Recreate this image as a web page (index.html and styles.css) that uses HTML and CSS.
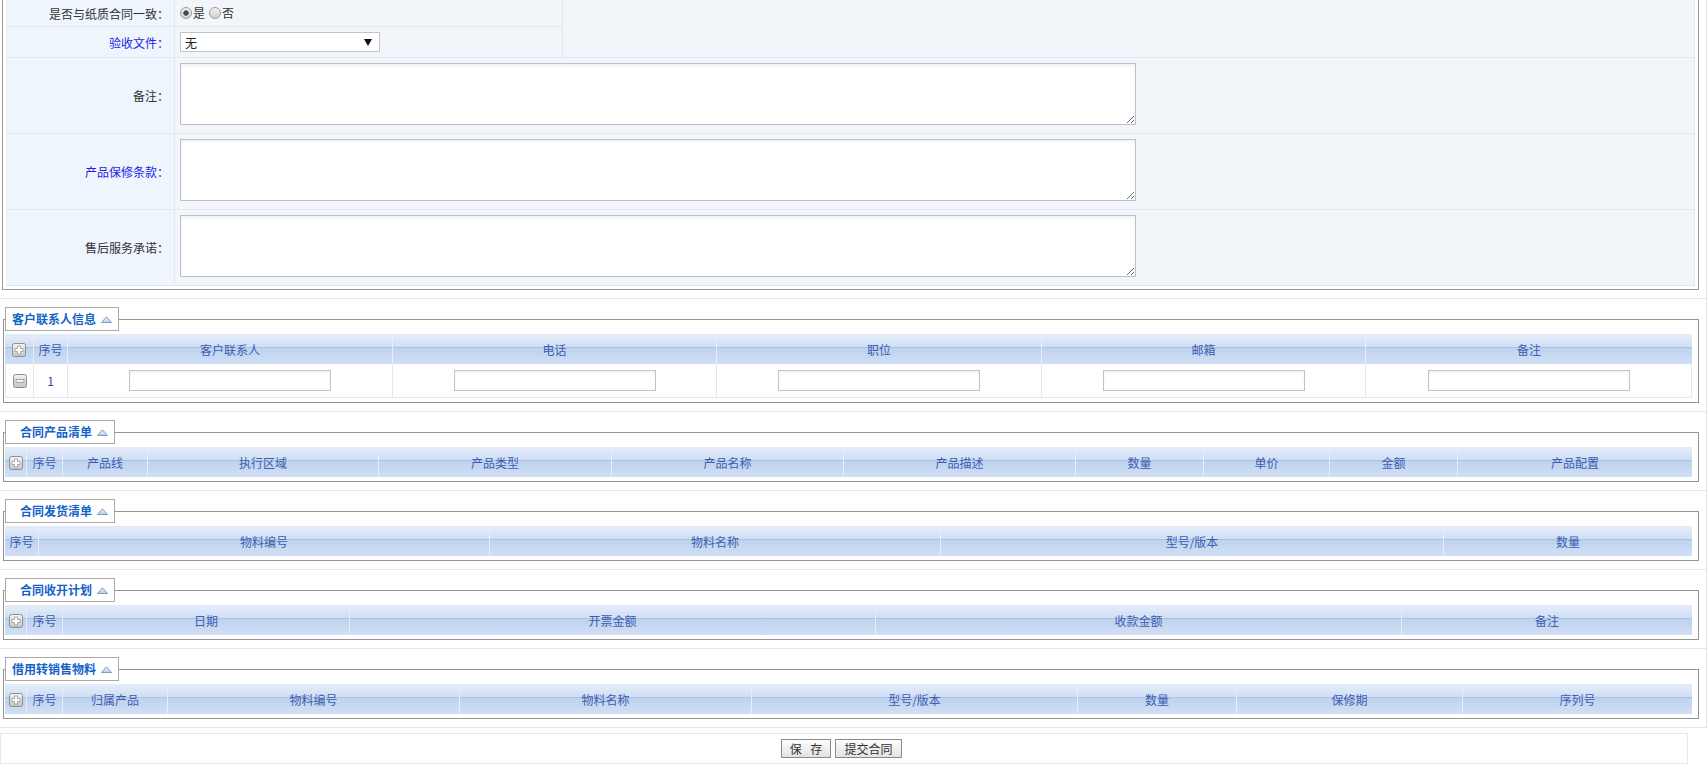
FILE: index.html
```html
<!DOCTYPE html>
<html lang="zh-CN">
<head>
<meta charset="utf-8">
<title>合同信息</title>
<link rel="stylesheet" href="styles.css">
</head>
<body>
<svg class="defs" width="0" height="0" aria-hidden="true">
  <defs>
    <linearGradient id="gbtn" x1="0" y1="0" x2="0" y2="1">
      <stop offset="0" stop-color="#f4f4f4"/>
      <stop offset="1" stop-color="#c4c4c4"/>
    </linearGradient>
    <linearGradient id="gtri" x1="0" y1="0" x2="0" y2="1">
      <stop offset="0" stop-color="#eaf2fc"/>
      <stop offset="1" stop-color="#b9d0ee"/>
    </linearGradient>
  </defs>
</svg>
<div class="page">
  <div class="sec sec-form">
    <div class="formbox">
      <table class="form">
        <colgroup><col class="fc1"><col class="fc2"><col class="fc3"></colgroup>
        <tr class="r1">
          <td class="lbl">是否与纸质合同一致：</td>
          <td class="val"><label class="radio"><input type="radio" name="same" checked>是</label><label class="radio"><input type="radio" name="same">否</label></td>
          <td class="val" rowspan="2"></td>
        </tr>
        <tr class="r2">
          <td class="lbl blue">验收文件：</td>
          <td class="val"><span class="selwrap"><select class="sel"><option>无</option></select></span></td>
        </tr>
        <tr class="rt">
          <td class="lbl">备注：</td>
          <td class="val top" colspan="2"><textarea></textarea></td>
        </tr>
        <tr class="rt">
          <td class="lbl blue">产品保修条款：</td>
          <td class="val top" colspan="2"><textarea></textarea></td>
        </tr>
        <tr class="rt">
          <td class="lbl">售后服务承诺：</td>
          <td class="val top" colspan="2"><textarea></textarea></td>
        </tr>
      </table>
    </div>
  </div>

  <div class="sec">
    <fieldset>
      <legend class="lg-a">客户联系人信息<svg class="tri" width="11" height="7" viewBox="0 0 11 7"><path d="M0.5 6.5 L5.5 0.8 L10.5 6.5 Z" fill="url(#gtri)" stroke="#7d9bc6"/></svg></legend>
      <table class="grid t-contact">
        <colgroup><col class="w29"><col class="w34"><col class="w325"><col class="w324"><col class="w325"><col class="w324"><col class="w326"></colgroup>
        <tr>
          <th><svg class="ico" width="14" height="14" viewBox="0 0 14 14"><rect x="0.5" y="0.5" width="13" height="13" rx="2" fill="url(#gbtn)" stroke="#8e8e8e"/><path d="M5.5 3 h3 v2.5 h2.5 v3 h-2.5 v2.5 h-3 v-2.5 h-2.5 v-3 h2.5z" fill="#fff" stroke="#9a9a9a" stroke-width="0.8"/></svg></th>
          <th>序号</th><th>客户联系人</th><th>电话</th><th>职位</th><th>邮箱</th><th>备注</th>
        </tr>
        <tr class="drow">
          <td><svg class="ico" width="14" height="14" viewBox="0 0 14 14"><rect x="0.5" y="0.5" width="13" height="13" rx="2" fill="url(#gbtn)" stroke="#8e8e8e"/><path d="M3 5.6 h8 v2.8 h-8z" fill="#fff" stroke="#8a8a8a" stroke-width="0.8"/></svg></td>
          <td class="num">1</td>
          <td><input class="txt" type="text"></td>
          <td><input class="txt" type="text"></td>
          <td><input class="txt" type="text"></td>
          <td><input class="txt" type="text"></td>
          <td><input class="txt" type="text"></td>
        </tr>
      </table>
    </fieldset>
  </div>

  <div class="sec">
    <fieldset>
      <legend class="lg-b">合同产品清单<svg class="tri" width="11" height="7" viewBox="0 0 11 7"><path d="M0.5 6.5 L5.5 0.8 L10.5 6.5 Z" fill="url(#gtri)" stroke="#7d9bc6"/></svg></legend>
      <table class="grid">
        <colgroup><col class="w22"><col class="w36"><col class="w85"><col class="w231"><col class="w233"><col class="w232"><col class="w232"><col class="w128"><col class="w126"><col class="w128"><col class="w234"></colgroup>
        <tr>
          <th><svg class="ico" width="14" height="14" viewBox="0 0 14 14"><rect x="0.5" y="0.5" width="13" height="13" rx="2" fill="url(#gbtn)" stroke="#8e8e8e"/><path d="M5.5 3 h3 v2.5 h2.5 v3 h-2.5 v2.5 h-3 v-2.5 h-2.5 v-3 h2.5z" fill="#fff" stroke="#9a9a9a" stroke-width="0.8"/></svg></th>
          <th>序号</th><th>产品线</th><th>执行区域</th><th>产品类型</th><th>产品名称</th><th>产品描述</th><th>数量</th><th>单价</th><th>金额</th><th>产品配置</th>
        </tr>
      </table>
    </fieldset>
  </div>

  <div class="sec">
    <fieldset>
      <legend class="lg-b">合同发货清单<svg class="tri" width="11" height="7" viewBox="0 0 11 7"><path d="M0.5 6.5 L5.5 0.8 L10.5 6.5 Z" fill="url(#gtri)" stroke="#7d9bc6"/></svg></legend>
      <table class="grid">
        <colgroup><col class="w34"><col class="w451"><col class="w451"><col class="w503"><col class="w248"></colgroup>
        <tr>
          <th>序号</th><th>物料编号</th><th>物料名称</th><th>型号/版本</th><th>数量</th>
        </tr>
      </table>
    </fieldset>
  </div>

  <div class="sec">
    <fieldset>
      <legend class="lg-b">合同收开计划<svg class="tri" width="11" height="7" viewBox="0 0 11 7"><path d="M0.5 6.5 L5.5 0.8 L10.5 6.5 Z" fill="url(#gtri)" stroke="#7d9bc6"/></svg></legend>
      <table class="grid">
        <colgroup><col class="w22"><col class="w36"><col class="w287"><col class="w526"><col class="w526"><col class="w290"></colgroup>
        <tr>
          <th><svg class="ico" width="14" height="14" viewBox="0 0 14 14"><rect x="0.5" y="0.5" width="13" height="13" rx="2" fill="url(#gbtn)" stroke="#8e8e8e"/><path d="M5.5 3 h3 v2.5 h2.5 v3 h-2.5 v2.5 h-3 v-2.5 h-2.5 v-3 h2.5z" fill="#fff" stroke="#9a9a9a" stroke-width="0.8"/></svg></th>
          <th>序号</th><th>日期</th><th>开票金额</th><th>收款金额</th><th>备注</th>
        </tr>
      </table>
    </fieldset>
  </div>

  <div class="sec">
    <fieldset>
      <legend class="lg-a">借用转销售物料<svg class="tri" width="11" height="7" viewBox="0 0 11 7"><path d="M0.5 6.5 L5.5 0.8 L10.5 6.5 Z" fill="url(#gtri)" stroke="#7d9bc6"/></svg></legend>
      <table class="grid">
        <colgroup><col class="w22"><col class="w36"><col class="w105"><col class="w292"><col class="w292"><col class="w326"><col class="w159"><col class="w226"><col class="w229"></colgroup>
        <tr>
          <th><svg class="ico" width="14" height="14" viewBox="0 0 14 14"><rect x="0.5" y="0.5" width="13" height="13" rx="2" fill="url(#gbtn)" stroke="#8e8e8e"/><path d="M5.5 3 h3 v2.5 h2.5 v3 h-2.5 v2.5 h-3 v-2.5 h-2.5 v-3 h2.5z" fill="#fff" stroke="#9a9a9a" stroke-width="0.8"/></svg></th>
          <th>序号</th><th>归属产品</th><th>物料编号</th><th>物料名称</th><th>型号/版本</th><th>数量</th><th>保修期</th><th>序列号</th>
        </tr>
      </table>
    </fieldset>
  </div>
</div>

<div class="btnbar">
  <button class="btn b-save" type="button">保&nbsp;存</button>
  <button class="btn b-submit" type="button">提交合同</button>
</div>
</body>
</html>
```

FILE: styles.css
```css
* { box-sizing: border-box; }
html, body { margin: 0; padding: 0; background: #fff; }
body {
  font-family: "Noto Sans CJK SC", "Microsoft YaHei", "Liberation Sans", sans-serif;
  font-size: 12px;
  color: #333;
}
.defs { position: absolute; width: 0; height: 0; overflow: hidden; }

.page { width: 1707px; border-right: 1px solid #e4e6ee; }
.sec { border-bottom: 1px solid #e4e6ef; padding: 8px 0 8px 3px; }
.sec-form { padding: 0 0 8px 2px; }

/* ---------- top form ---------- */
.formbox {
  width: 1697px;
  border: 1px solid #999;
  border-top: none;
  padding: 0 3px 3px 3px;
}
table { border-collapse: separate; border-spacing: 0; table-layout: fixed; }
.form { width: 1689px; }
.fc1 { width: 169px; }
.fc2 { width: 388px; }
.fc3 { width: 1132px; }
.form td {
  border-right: 1px solid #e2e7ef;
  border-bottom: 1px solid #e2e7ef;
  padding: 0;
}
.r1 td { height: 27px; }
.r2 td { height: 31px; }
.rt td { height: 76px; }
.lbl {
  background: #eef5fd;
  text-align: right;
  padding-right: 5px !important;
  vertical-align: middle;
  white-space: nowrap;
}
.lbl.blue { color: #2323e6; }
.val { background: #f2f5fa; padding-left: 5px !important; vertical-align: middle; }
.val.top { vertical-align: top; padding-top: 5px !important; }

.radio { display: inline-flex; align-items: center; margin-right: 4px; line-height: 14px; }
.radio input {
  -webkit-appearance: none;
  appearance: none;
  width: 12px; height: 12px;
  margin: 0 1px 0 0;
  border: 1px solid #9c9c9c;
  border-radius: 50%;
  background: linear-gradient(#f2f2f2, #d2d2d2);
}
.radio input:checked {
  background: radial-gradient(circle, #4a4a4a 0, #4a4a4a 2.4px, transparent 3px), linear-gradient(#f2f2f2, #d2d2d2);
}

.selwrap { position: relative; display: inline-block; vertical-align: middle; }
.selwrap::after {
  content: "";
  position: absolute;
  right: 8px; top: 7px;
  border-left: 4px solid transparent;
  border-right: 4px solid transparent;
  border-top: 7px solid #111;
  pointer-events: none;
}
.sel {
  -webkit-appearance: none;
  appearance: none;
  display: block;
  width: 200px; height: 20px;
  border: 1px solid #bfc2cf;
  background: #fff;
  font: inherit;
  font-size: 12px;
  color: #222;
  padding: 0 0 0 4px;
  margin: 0;
  border-radius: 0;
}
textarea {
  display: block;
  width: 956px; height: 62px;
  margin: 0;
  border: 1px solid #bcc0cd;
  box-shadow: inset 0 2px 3px rgba(0, 0, 0, 0.06);
  background: #fff;
  font: inherit;
  resize: both;
}

/* ---------- fieldsets ---------- */
fieldset {
  margin: 0;
  width: 1696px;
  min-width: 0;
  border: 1px solid #949494;
  padding: 3px 6px 4px 1px;
}
legend {
  display: flex;
  align-items: center;
  height: 24px;
  border: 1px solid #aaa;
  background: #fff;
  color: #1362c8;
  font-weight: bold;
  font-size: 12px;
  line-height: 22px;
  padding: 0 6px;
}
legend.lg-b { padding-left: 14px; }
.tri { margin-left: 5px; display: block; }

.grid { width: 1687px; }
.grid th {
  height: 30px;
  padding: 0;
  font-weight: normal;
  color: #3d5daf;
  text-align: center;
  vertical-align: middle;
  border-top: 1px solid #e4ebf6;
  border-right: 1px solid #e6edf8;
  background: linear-gradient(#e3ecf9 0, #d0def4 12px, #a8c3eb 12px, #a8c3eb 13px, #bed2ef 13px, #d0dff4 100%);
}
.grid th:last-child { border-right: none; }
.grid td {
  height: 34px;
  padding: 0;
  text-align: center;
  vertical-align: middle;
  border-right: 1px solid #e4e6f0;
  border-bottom: 1px solid #e4e6f0;
  background: #fff;
}
.grid td:first-child { border-left: 1px solid #e4e6f0; }
.ico { display: block; margin: 0 auto; }
.num { color: #4b3f90; }
.txt {
  width: 202px; height: 21px;
  border: 1px solid #bfc2cf;
  box-shadow: inset 0 2px 3px rgba(0, 0, 0, 0.05);
  margin: 0;
  font: inherit;
  vertical-align: middle;
}

.w22 { width: 22px; } .w29 { width: 29px; } .w34 { width: 34px; } .w36 { width: 36px; }
.w85 { width: 85px; } .w105 { width: 105px; } .w126 { width: 126px; } .w128 { width: 128px; }
.w159 { width: 159px; } .w226 { width: 226px; } .w229 { width: 229px; } .w231 { width: 231px; }
.w232 { width: 232px; } .w233 { width: 233px; } .w234 { width: 234px; } .w248 { width: 248px; }
.w287 { width: 287px; } .w290 { width: 290px; } .w292 { width: 292px; } .w324 { width: 324px; }
.w325 { width: 325px; } .w326 { width: 326px; } .w451 { width: 451px; } .w503 { width: 503px; }
.w526 { width: 526px; }

/* ---------- buttons ---------- */
.btnbar {
  margin-top: 5px;
  width: 1688px;
  border: 1px solid #e4e6ee;
  padding: 5px 5px 5px 0;
  display: flex;
  justify-content: center;
  gap: 4px;
}
.btn {
  height: 19px;
  padding: 0;
  border: 1px solid #8b8b8b;
  border-radius: 0;
  background: linear-gradient(#fdfdfd, #e2e2e2);
  font: inherit;
  font-size: 12px;
  color: #333;
  line-height: 17px;
}
.b-save { width: 50px; letter-spacing: 3px; text-indent: 3px; }
.b-submit { width: 67px; }
```
